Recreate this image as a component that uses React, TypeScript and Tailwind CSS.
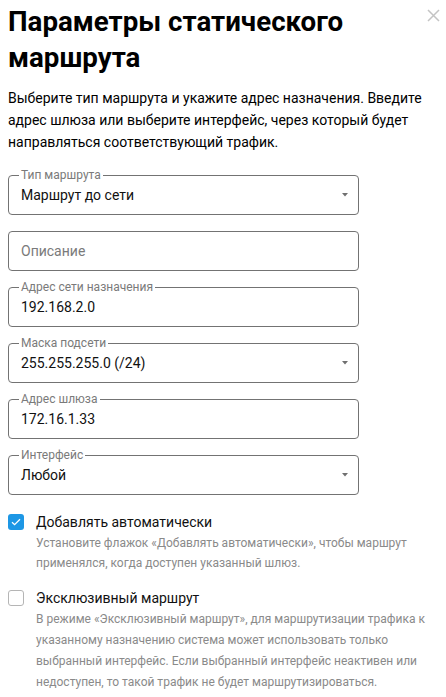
import { useState } from "react";

type FieldProps = {
  label?: string;
  value?: string;
  placeholder?: string;
  select?: boolean;
};

function Field({ label, value, placeholder, select }: FieldProps) {
  return (
    <div className="relative h-10">
      <fieldset
        className={
          label
            ? "pointer-events-none absolute inset-x-0 -top-[6px] bottom-0 m-0 rounded-[4px] border border-[#737373] px-[10px]"
            : "pointer-events-none absolute inset-0 m-0 rounded-[4px] border border-[#737373]"
        }
      >
        {label && (
          <legend className="px-[2px] text-[12px] leading-[12px] text-[#7a7a7a]">
            {label}
          </legend>
        )}
      </fieldset>
      <div className="flex h-10 items-center pl-[13px] pr-[11px]">
        <span
          className={
            value
              ? "flex-1 text-[14px] text-[#111]"
              : "flex-1 text-[14px] text-[#7a7a7a]"
          }
        >
          {value || placeholder}
        </span>
        {select && (
          <svg width="6" height="4" viewBox="0 0 6 4">
            <path d="M0 0h6L3 3.5z" fill="#707070" />
          </svg>
        )}
      </div>
    </div>
  );
}

function Check({ checked }: { checked: boolean }) {
  return checked ? (
    <span className="flex h-4 w-4 shrink-0 items-center justify-center rounded-[3px] bg-[#1d97e5]">
      <svg width="10" height="8" viewBox="0 0 10 8">
        <path d="M1 4.2l2.6 2.5L9 1.2" fill="none" stroke="#fff" strokeWidth="1.3" />
      </svg>
    </span>
  ) : (
    <span className="block h-4 w-4 shrink-0 rounded-[3px] border border-[#b5b5b5] bg-white" />
  );
}

export default function App() {
  const [auto, setAuto] = useState(true);
  const [excl, setExcl] = useState(false);

  return (
    <div className="relative min-h-screen bg-white px-2 font-['Roboto',sans-serif] text-black">
      <button className="absolute right-[5px] top-[8px] p-[1px] text-[#c4c4c4]">
        <svg width="13" height="13" viewBox="0 0 13 13">
          <path d="M1 1l11 11M12 1L1 12" stroke="currentColor" strokeWidth="1.5" />
        </svg>
      </button>

      <h1 className="pt-[4px] pr-6 text-[27.7px] font-bold leading-[36px]">
        Параметры статического маршрута
      </h1>
      <p className="mt-[11px] text-[14px] leading-[22px]">
        Выберите тип маршрута и укажите адрес назначения. Введите адрес шлюза или выберите интерфейс, через который будет направляться соответствующий трафик.
      </p>

      <div className="mt-[22px] flex w-[351px] flex-col gap-4">
        <Field label="Тип маршрута" value="Маршрут до сети" select />
        <Field placeholder="Описание" />
        <Field label="Адрес сети назначения" value="192.168.2.0" />
        <Field label="Маска подсети" value="255.255.255.0 (/24)" select />
        <Field label="Адрес шлюза" value="172.16.1.33" />
        <Field label="Интерфейс" value="Любой" select />
      </div>

      <div className="mt-[17px] flex flex-col gap-[15px] pr-2">
        <label className="flex cursor-pointer gap-3" onClick={() => setAuto(!auto)}>
          <span className="pt-[2px]">
            <Check checked={auto} />
          </span>
          <span>
            <span className="block text-[14px] leading-[20px] text-[#111]">
              Добавлять автоматически
            </span>
            <span className="mt-[1px] block text-[12px] leading-[20px] text-[#8a8a8a]">
              Установите флажок «Добавлять автоматически», чтобы маршрут применялся, когда доступен указанный шлюз.
            </span>
          </span>
        </label>
        <label className="flex cursor-pointer gap-3" onClick={() => setExcl(!excl)}>
          <span className="pt-[2px]">
            <Check checked={excl} />
          </span>
          <span>
            <span className="block text-[14px] leading-[20px] text-[#111]">
              Эксклюзивный маршрут
            </span>
            <span className="mt-[1px] block text-[12px] leading-[21px] text-[#8a8a8a]">
              В режиме «Эксклюзивный маршрут», для маршрутизации трафика к указанному назначению система может использовать только выбранный интерфейс. Если выбранный интерфейс неактивен или недоступен, то такой трафик не будет маршрутизироваться.
            </span>
          </span>
        </label>
      </div>
    </div>
  );
}
